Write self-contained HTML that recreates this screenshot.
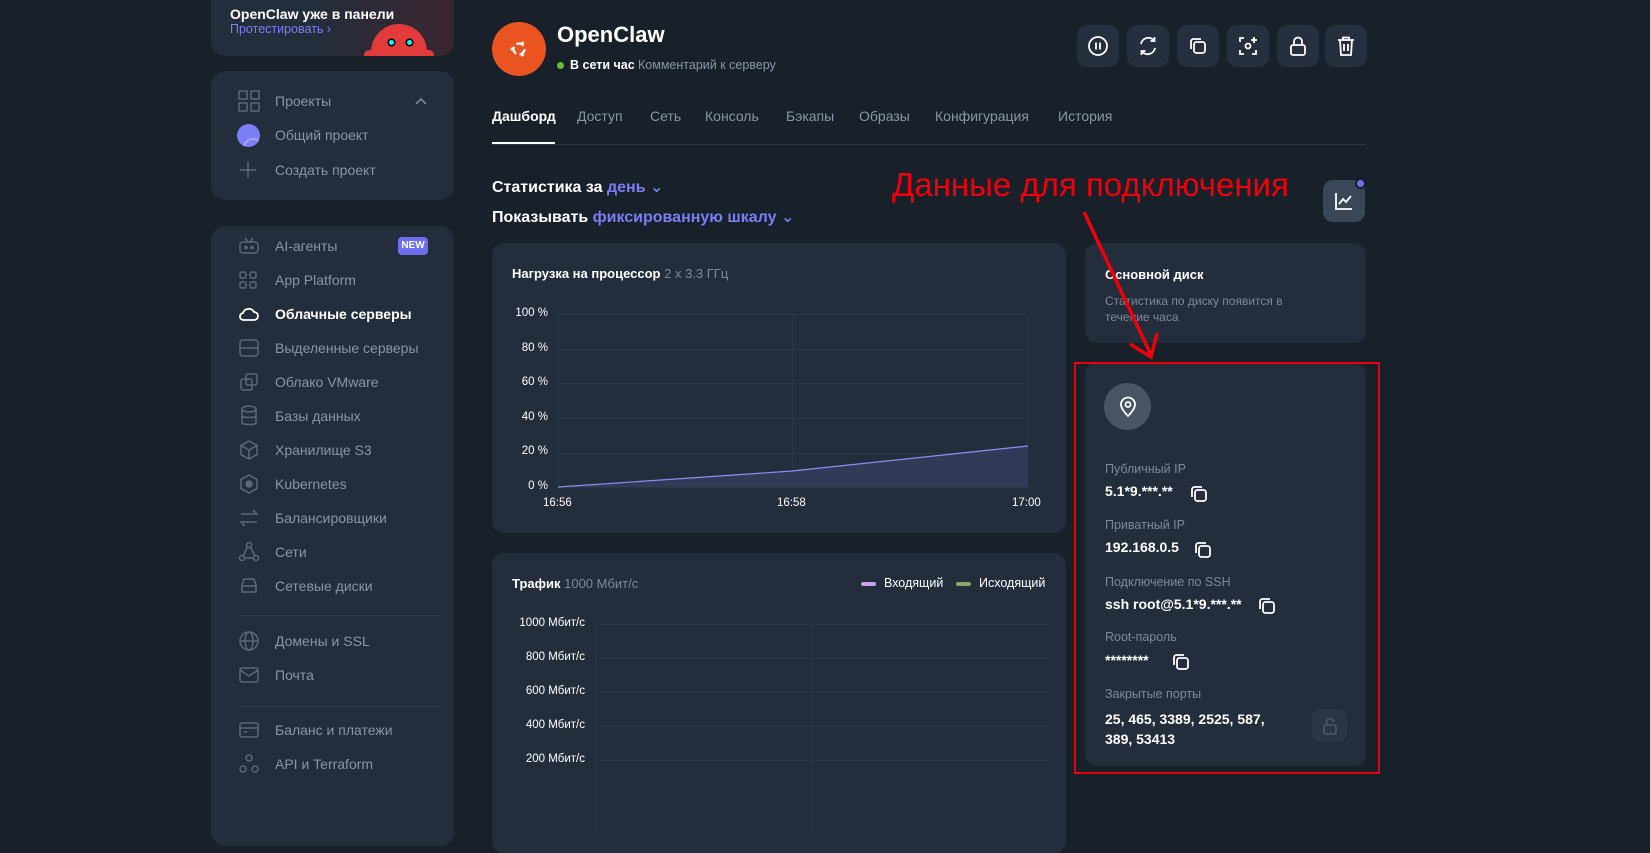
<!DOCTYPE html>
<html><head><meta charset="utf-8"><style>
*{margin:0;padding:0;box-sizing:border-box}
body{width:1650px;height:825px;overflow:hidden;background:#18202a;font-family:"Liberation Sans","DejaVu Sans",sans-serif;color:#fff;position:relative}
.abs{position:absolute}
.card{position:absolute;background:#232d3b;border-radius:12px}
.nav{position:absolute;left:240px;height:16px;font-size:14px;color:#8a96a5;display:flex;align-items:center}
.nav svg{position:absolute;left:-2px}
.nav span{position:absolute;left:35px;white-space:nowrap}
.ibtn{position:absolute;top:25px;width:42px;height:42px;border-radius:10px;background:#252f3d;display:flex;align-items:center;justify-content:center}
.tab{position:absolute;top:108px;font-size:14px;color:#8a96a5}
.lbl{position:absolute;left:1105px;font-size:12.5px;color:#7f8a99}
.val{position:absolute;left:1105px;font-size:14px;font-weight:bold;color:#fff}
.ax{position:absolute;font-size:11.5px;color:#fff;text-align:right}
.gl{position:absolute;height:1px;background:#2c3746}
.gv{position:absolute;width:1px;background:#2c3746}
</style></head><body>

<!-- sidebar promo -->
<div class="card" style="left:211px;top:-20px;width:243px;height:76px;border-radius:14px;overflow:hidden;background:linear-gradient(90deg,#232d3b 40%,#3a2630 100%)">
 <div class="abs" style="left:19px;top:26px;font-size:14px;font-weight:bold">OpenClaw уже в панели</div>
 <div class="abs" style="left:19px;top:42px;font-size:12.5px;color:#7b7ff5">Протестировать ›</div>
 <div class="abs" style="left:160px;top:44px;width:56px;height:40px;border-radius:28px 28px 0 0;background:#e23b3b"></div>
 <div class="abs" style="left:153px;top:70px;width:14px;height:10px;border-radius:6px;background:#e23b3b"></div>
 <div class="abs" style="left:209px;top:70px;width:14px;height:10px;border-radius:6px;background:#e23b3b"></div>
 <div class="abs" style="left:178px;top:60px;width:5px;height:5px;border-radius:50%;background:#0ff;box-shadow:0 0 0 1.5px #000"></div>
 <div class="abs" style="left:196px;top:60px;width:5px;height:5px;border-radius:50%;background:#0ff;box-shadow:0 0 0 1.5px #000"></div>
</div>

<!-- projects -->
<div class="card" style="left:211px;top:71px;width:243px;height:129px;border-radius:14px"></div>
<div class="nav" style="top:93px"><svg width="22" height="22" viewBox="0 0 22 22" fill="none" stroke="#5d6878" stroke-width="1.5"><rect x="1" y="1" width="8" height="8"/><rect x="13" y="1" width="8" height="8"/><rect x="1" y="13" width="8" height="8"/><rect x="13" y="13" width="8" height="8"/></svg><span>Проекты</span></div>
<svg class="abs" style="left:414px;top:96px" width="14" height="10" viewBox="0 0 14 10" fill="none" stroke="#7f8a99" stroke-width="1.6"><path d="M2 8 L7 3 L12 8"/></svg>
<div class="abs" style="left:237px;top:124px;width:23px;height:23px;border-radius:50%;background:#7b7ff5;overflow:hidden"><div class="abs" style="left:6px;top:14px;width:20px;height:20px;border-radius:50%;border:2px solid #a3a6fa"></div></div>
<div class="nav" style="top:127px"><span>Общий проект</span></div>
<div class="nav" style="top:162px"><svg width="20" height="20" viewBox="0 0 20 20" stroke="#5d6878" stroke-width="1.5"><path d="M10 2V18M2 10H18"/></svg><span>Создать проект</span></div>

<!-- nav card -->
<div class="card" style="left:211px;top:226px;width:243px;height:620px;border-radius:14px"></div>
<div class="nav" style="top:238px"><svg width="22" height="18" viewBox="0 0 22 18" fill="none" stroke="#5d6878" stroke-width="1.5"><rect x="2" y="5" width="18" height="11" rx="3"/><path d="M7 1l3 4M15 1l-3 4"/><circle cx="8" cy="10.5" r="1" fill="#5d6878"/><circle cx="14" cy="10.5" r="1" fill="#5d6878"/></svg><span>AI-агенты</span></div>
<div class="abs" style="left:398px;top:237px;width:30px;height:18px;border-radius:4px;background:#6e6ff0;font-size:10px;font-weight:bold;text-align:center;line-height:18px">NEW</div>
<div class="nav" style="top:272px"><svg width="20" height="20" viewBox="0 0 20 20" fill="none" stroke="#5d6878" stroke-width="1.5"><rect x="2" y="2" width="6" height="6" rx="2"/><rect x="12" y="2" width="6" height="6" rx="2"/><rect x="2" y="12" width="6" height="6" rx="2"/><rect x="12" y="12" width="6" height="6" rx="2"/></svg><span>App Platform</span></div>
<div class="nav" style="top:306px;color:#fff;font-weight:bold"><svg width="22" height="18" viewBox="0 0 22 18" fill="none" stroke="#fff" stroke-width="1.8"><path d="M6 15h10a4 4 0 0 0 0-8 6 6 0 0 0-11 1 3.5 3.5 0 0 0 1 7z"/></svg><span>Облачные серверы</span></div>
<div class="nav" style="top:340px"><svg width="22" height="20" viewBox="0 0 22 20" fill="none" stroke="#5d6878" stroke-width="1.5"><rect x="2" y="2" width="18" height="16" rx="3"/><path d="M2 10h18"/></svg><span>Выделенные серверы</span></div>
<div class="nav" style="top:374px"><svg width="22" height="20" viewBox="0 0 22 20" fill="none" stroke="#5d6878" stroke-width="1.5"><rect x="8" y="2" width="11" height="11" rx="2"/><rect x="3" y="7" width="11" height="11" rx="2"/></svg><span>Облако VMware</span></div>
<div class="nav" style="top:408px"><svg width="22" height="22" viewBox="0 0 22 22" fill="none" stroke="#5d6878" stroke-width="1.5"><ellipse cx="11" cy="4" rx="7" ry="3"/><path d="M4 4v14c0 2 14 2 14 0V4M4 11c0 2 14 2 14 0"/></svg><span>Базы данных</span></div>
<div class="nav" style="top:442px"><svg width="22" height="22" viewBox="0 0 22 22" fill="none" stroke="#5d6878" stroke-width="1.5"><path d="M11 2l8 4.5v9L11 20l-8-4.5v-9zM3 6.5l8 4.5 8-4.5M11 11v9"/></svg><span>Хранилище S3</span></div>
<div class="nav" style="top:476px"><svg width="22" height="22" viewBox="0 0 22 22" fill="none" stroke="#5d6878" stroke-width="1.5"><path d="M11 2l8 4.5v9L11 20l-8-4.5v-9z"/><circle cx="11" cy="11" r="3" fill="#5d6878"/></svg><span>Kubernetes</span></div>
<div class="nav" style="top:510px"><svg width="22" height="22" viewBox="0 0 22 22" fill="none" stroke="#5d6878" stroke-width="1.5"><path d="M3 7h16l-4-4M19 15H3l4 4"/></svg><span>Балансировщики</span></div>
<div class="nav" style="top:544px"><svg width="22" height="22" viewBox="0 0 22 22" fill="none" stroke="#5d6878" stroke-width="1.5"><circle cx="11" cy="4" r="2.5"/><circle cx="4" cy="17" r="2.5"/><circle cx="18" cy="17" r="2.5"/><path d="M9.5 6L5 15M12.5 6L17 15M6.5 17h9"/></svg><span>Сети</span></div>
<div class="nav" style="top:578px"><svg width="22" height="22" viewBox="0 0 22 22" fill="none" stroke="#5d6878" stroke-width="1.5"><path d="M4 10l2-6h10l2 6v7H4zM4 11h14"/></svg><span>Сетевые диски</span></div>
<div class="abs" style="left:240px;top:615px;width:200px;height:1px;background:#2f3a48"></div>
<div class="nav" style="top:633px"><svg width="22" height="22" viewBox="0 0 22 22" fill="none" stroke="#5d6878" stroke-width="1.5"><circle cx="11" cy="11" r="9"/><ellipse cx="11" cy="11" rx="4" ry="9"/><path d="M2 11h18"/></svg><span>Домены и SSL</span></div>
<div class="nav" style="top:667px"><svg width="22" height="22" viewBox="0 0 22 22" fill="none" stroke="#5d6878" stroke-width="1.5"><rect x="2" y="4" width="18" height="14" rx="2"/><path d="M2 6l9 6 9-6"/></svg><span>Почта</span></div>
<div class="abs" style="left:240px;top:706px;width:200px;height:1px;background:#2f3a48"></div>
<div class="nav" style="top:722px"><svg width="22" height="22" viewBox="0 0 22 22" fill="none" stroke="#5d6878" stroke-width="1.5"><rect x="2" y="4" width="18" height="14" rx="2"/><path d="M2 9h18M6 13h3"/></svg><span>Баланс и платежи</span></div>
<div class="nav" style="top:756px"><svg width="22" height="22" viewBox="0 0 22 22" fill="none" stroke="#5d6878" stroke-width="1.5"><circle cx="11" cy="5" r="3"/><circle cx="5" cy="16" r="3"/><circle cx="17" cy="16" r="3"/></svg><span>API и Terraform</span></div>

<!-- header -->
<div class="abs" style="left:492px;top:22px;width:54px;height:54px;border-radius:50%;background:#e95420"></div>
<svg class="abs" style="left:507px;top:37px" width="24" height="24" viewBox="0 0 24 24" fill="none" stroke="#fff" stroke-width="2.2"><circle cx="12" cy="12" r="5.5" stroke-dasharray="8 3.5"/><circle cx="5" cy="12" r="1.5" fill="#fff" stroke="none"/><circle cx="15.5" cy="6" r="1.5" fill="#fff" stroke="none"/><circle cx="15.5" cy="18" r="1.5" fill="#fff" stroke="none"/></svg>
<div class="abs" style="left:557px;top:22px;font-size:22px;font-weight:bold">OpenClaw</div>
<div class="abs" style="left:557px;top:62px;width:7px;height:7px;border-radius:50%;background:#6ac12b"></div>
<div class="abs" style="left:570px;top:58px;font-size:12.5px;font-weight:bold">В сети час</div>
<div class="abs" style="left:638px;top:58px;font-size:12.5px;color:#8a96a5">Комментарий к серверу</div>

<div class="ibtn" style="left:1077px"><svg width="22" height="22" viewBox="0 0 22 22" fill="none" stroke="#fff" stroke-width="1.8"><circle cx="11" cy="11" r="9"/><path d="M9 7.5v7M13 7.5v7"/></svg></div>
<div class="ibtn" style="left:1127px"><svg width="22" height="22" viewBox="0 0 22 22" fill="none" stroke="#fff" stroke-width="1.8"><path d="M4 9a7.5 7.5 0 0 1 13.5-3M18 13a7.5 7.5 0 0 1-13.5 3M17.5 2v4h-4M4.5 20v-4h4"/></svg></div>
<div class="ibtn" style="left:1177px"><svg width="20" height="20" viewBox="0 0 20 20" fill="none" stroke="#fff" stroke-width="1.8"><rect x="6" y="6" width="11" height="11" rx="2.5"/><path d="M13 3H5.5A2.5 2.5 0 0 0 3 5.5V13"/></svg></div>
<div class="ibtn" style="left:1227px"><svg width="22" height="22" viewBox="0 0 22 22" fill="none" stroke="#fff" stroke-width="1.8"><path d="M3 7V3h4M3 15v4h4M15 19h4v-4M17 2v6M14 5h6"/><circle cx="11" cy="11" r="2.5"/></svg></div>
<div class="ibtn" style="left:1277px"><svg width="20" height="22" viewBox="0 0 20 22" fill="none" stroke="#fff" stroke-width="1.8"><rect x="3" y="10" width="14" height="10" rx="2"/><path d="M6 10V6.5a4 4 0 0 1 8 0V10"/></svg></div>
<div class="ibtn" style="left:1325px"><svg width="20" height="22" viewBox="0 0 20 22" fill="none" stroke="#fff" stroke-width="1.8"><path d="M2 5h16M7 5V2.5h6V5M4 5l1 15h10l1-15M8 9v7M12 9v7"/></svg></div>

<!-- tabs -->
<div class="tab" style="left:492px;color:#fff;font-weight:bold">Дашборд</div>
<div class="tab" style="left:577px">Доступ</div>
<div class="tab" style="left:650px">Сеть</div>
<div class="tab" style="left:705px">Консоль</div>
<div class="tab" style="left:786px">Бэкапы</div>
<div class="tab" style="left:859px">Образы</div>
<div class="tab" style="left:935px">Конфигурация</div>
<div class="tab" style="left:1058px">История</div>
<div class="abs" style="left:492px;top:144px;width:874px;height:1px;background:#2c3746"></div>
<div class="abs" style="left:492px;top:142px;width:63px;height:2px;background:#fff"></div>

<div class="abs" style="left:492px;top:177px;font-size:16px;font-weight:bold">Статистика за <span style="color:#7b7ff5">день ⌄</span></div>
<div class="abs" style="left:492px;top:207px;font-size:16px;font-weight:bold">Показывать <span style="color:#7b7ff5">фиксированную шкалу ⌄</span></div>
<div class="abs" style="left:1323px;top:180px;width:42px;height:42px;border-radius:10px;background:#3b4656;display:flex;align-items:center;justify-content:center"><svg width="22" height="22" viewBox="0 0 22 22" fill="none" stroke="#fff" stroke-width="1.8"><path d="M3 3v16h16M6 14l4-5 3 3 5-6"/></svg></div>
<div class="abs" style="left:1355px;top:178px;width:11px;height:11px;border-radius:50%;background:#6e6ff0;border:2px solid #18202a"></div>

<!-- CPU card -->
<div class="card" style="left:492px;top:243px;width:574px;height:290px"></div>
<div class="abs" style="left:512px;top:266px;font-size:13px;font-weight:bold">Нагрузка на процессор <span style="color:#7f8a99;font-weight:normal">2 x 3.3 ГГц</span></div>
<div class="gl" style="left:558px;top:314px;width:470px"></div>
<div class="gl" style="left:558px;top:349px;width:470px"></div>
<div class="gl" style="left:558px;top:383px;width:470px"></div>
<div class="gl" style="left:558px;top:418px;width:470px"></div>
<div class="gl" style="left:558px;top:453px;width:470px"></div>
<div class="gl" style="left:558px;top:487px;width:470px"></div>
<div class="gv" style="left:558px;top:314px;height:173px"></div>
<div class="gv" style="left:792px;top:314px;height:173px"></div>
<div class="gv" style="left:1027px;top:314px;height:173px"></div>
<div class="ax" style="left:500px;width:48px;top:307px">100 %</div>
<div class="ax" style="left:500px;width:48px;top:342px">80 %</div>
<div class="ax" style="left:500px;width:48px;top:376px">60 %</div>
<div class="ax" style="left:500px;width:48px;top:411px">40 %</div>
<div class="ax" style="left:500px;width:48px;top:445px">20 %</div>
<div class="ax" style="left:500px;width:48px;top:480px">0 %</div>
<svg class="abs" style="left:558px;top:440px" width="471" height="48"><path d="M0 47 L234 31 L470 6 L470 47Z" fill="#333a58"/><path d="M0 47 L234 31 L470 6" fill="none" stroke="#8c8ff0" stroke-width="1.2"/></svg>
<div class="ax" style="left:543px;top:497px">16:56</div>
<div class="ax" style="left:777px;top:497px">16:58</div>
<div class="ax" style="left:1012px;top:497px">17:00</div>

<!-- traffic card -->
<div class="card" style="left:492px;top:553px;width:574px;height:300px"></div>
<div class="abs" style="left:512px;top:576px;font-size:13px;font-weight:bold">Трафик <span style="color:#7f8a99;font-weight:normal">1000 Мбит/с</span></div>
<div class="abs" style="left:861px;top:582px;width:15px;height:4px;border-radius:2px;background:#c9a0e8"></div>
<div class="abs" style="left:884px;top:576px;font-size:12.5px;color:#fff">Входящий</div>
<div class="abs" style="left:956px;top:582px;width:15px;height:4px;border-radius:2px;background:#86a968"></div>
<div class="abs" style="left:979px;top:576px;font-size:12.5px;color:#fff">Исходящий</div>
<div class="gl" style="left:595px;top:624px;width:452px"></div>
<div class="gl" style="left:595px;top:658px;width:452px"></div>
<div class="gl" style="left:595px;top:692px;width:452px"></div>
<div class="gl" style="left:595px;top:726px;width:452px"></div>
<div class="gl" style="left:595px;top:760px;width:452px"></div>
<div class="gv" style="left:595px;top:624px;height:210px"></div>
<div class="gv" style="left:811px;top:624px;height:210px"></div>
<div class="ax" style="left:500px;width:85px;top:617px">1000 Мбит/с</div>
<div class="ax" style="left:500px;width:85px;top:651px">800 Мбит/с</div>
<div class="ax" style="left:500px;width:85px;top:685px">600 Мбит/с</div>
<div class="ax" style="left:500px;width:85px;top:719px">400 Мбит/с</div>
<div class="ax" style="left:500px;width:85px;top:753px">200 Мбит/с</div>

<!-- disk card -->
<div class="card" style="left:1085px;top:243px;width:281px;height:100px"></div>
<div class="abs" style="left:1105px;top:267px;font-size:13px;font-weight:bold">Основной диск</div>
<div class="abs" style="left:1105px;top:293px;font-size:12px;color:#7f8a99;line-height:16px;width:200px">Статистика по диску появится в течение часа</div>

<!-- info card -->
<div class="card" style="left:1085px;top:363px;width:281px;height:403px"></div>
<div class="abs" style="left:1104px;top:383px;width:47px;height:47px;border-radius:50%;background:#4a5563;display:flex;align-items:center;justify-content:center"><svg width="20" height="22" viewBox="0 0 20 22" fill="none" stroke="#fff" stroke-width="1.8"><path d="M10 20s-7-6.5-7-11.5a7 7 0 0 1 14 0C17 13.5 10 20 10 20z"/><circle cx="10" cy="8.5" r="2.5"/></svg></div>
<div class="lbl" style="top:462px">Публичный IP</div>
<div class="val" style="top:483px">5.1*9.***.**</div>
<div class="lbl" style="top:518px">Приватный IP</div>
<div class="val" style="top:539px">192.168.0.5</div>
<div class="lbl" style="top:575px">Подключение по SSH</div>
<div class="val" style="top:596px">ssh root@5.1*9.***.**</div>
<div class="lbl" style="top:630px">Root-пароль</div>
<div class="val" style="top:652px">********</div>
<div class="lbl" style="top:687px">Закрытые порты</div>
<div class="val" style="top:709px;line-height:20px">25, 465, 3389, 2525, 587,<br>389, 53413</div>
<svg class="abs" style="left:1189px;top:484px" width="20" height="20" viewBox="0 0 20 20" fill="none" stroke="#fff" stroke-width="1.8"><rect x="6" y="6" width="11" height="11" rx="2.5"/><path d="M13 3H5.5A2.5 2.5 0 0 0 3 5.5V13"/></svg>
<svg class="abs" style="left:1193px;top:540px" width="20" height="20" viewBox="0 0 20 20" fill="none" stroke="#fff" stroke-width="1.8"><rect x="6" y="6" width="11" height="11" rx="2.5"/><path d="M13 3H5.5A2.5 2.5 0 0 0 3 5.5V13"/></svg>
<svg class="abs" style="left:1257px;top:596px" width="20" height="20" viewBox="0 0 20 20" fill="none" stroke="#fff" stroke-width="1.8"><rect x="6" y="6" width="11" height="11" rx="2.5"/><path d="M13 3H5.5A2.5 2.5 0 0 0 3 5.5V13"/></svg>
<svg class="abs" style="left:1171px;top:652px" width="20" height="20" viewBox="0 0 20 20" fill="none" stroke="#fff" stroke-width="1.8"><rect x="6" y="6" width="11" height="11" rx="2.5"/><path d="M13 3H5.5A2.5 2.5 0 0 0 3 5.5V13"/></svg>
<div class="abs" style="left:1312px;top:709px;width:35px;height:33px;border-radius:9px;background:#2b3543;display:flex;align-items:center;justify-content:center"><svg width="16" height="18" viewBox="0 0 16 18" fill="none" stroke="#4e5968" stroke-width="1.6"><rect x="2" y="8" width="12" height="9" rx="2"/><path d="M4.5 8V5a3.5 3.5 0 0 1 7 0"/></svg></div>

<!-- annotation -->
<div class="abs" style="left:1074px;top:362px;width:306px;height:412px;border:2px solid #e8000a"></div>
<div class="abs" style="left:892px;top:166px;font-size:33px;color:#f0000a;white-space:nowrap">Данные для подключения</div>
<svg class="abs" style="left:0;top:0" width="1650" height="825"><path d="M1084 212 L1151 355" stroke="#f0000a" stroke-width="3.5" fill="none"/><path d="M1130 344 L1151 357 L1157 333" stroke="#f0000a" stroke-width="3.5" fill="none"/></svg>

</body></html>
